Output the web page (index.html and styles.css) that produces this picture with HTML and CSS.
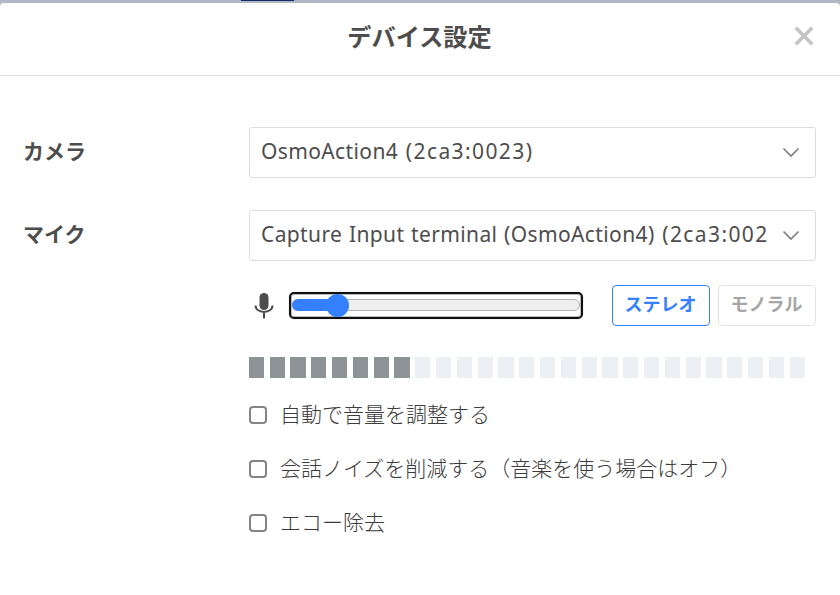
FILE: index.html
```html
<!DOCTYPE html>
<html lang="ja">
<head>
<meta charset="utf-8">
<title>デバイス設定</title>
<link rel="stylesheet" href="styles.css">
</head>
<body>
<div class="page-accent"></div>
<main class="modal">
  <header class="header">
    <h1 class="title">デバイス設定</h1>
    <button class="close" aria-label="閉じる"><svg width="20" height="20" viewBox="0 0 20 20"><path d="M1.8 1.8 18.2 18.2M18.2 1.8 1.8 18.2"/></svg></button>
  </header>
  <div class="body">
    <section class="row">
      <h2 class="label">カメラ</h2>
      <div class="select"><span class="value">OsmoAction4 <span class="code">(2ca3:0023)</span></span><svg class="chevron" width="18" height="11" viewBox="0 0 18 11"><path d="M1.5 1.5 9 9 16.5 1.5"/></svg></div>
    </section>
    <section class="row">
      <h2 class="label">マイク</h2>
      <div class="field">
        <div class="select"><span class="value">Capture Input terminal (OsmoAction4) <span class="code">(2ca3:0023)</span></span><svg class="chevron" width="18" height="11" viewBox="0 0 18 11"><path d="M1.5 1.5 9 9 16.5 1.5"/></svg></div>
        <div class="controls">
          <svg class="mic" width="20" height="28" viewBox="0 0 20 28"><rect x="5.5" y="1" width="9" height="17" rx="4.5"/><path d="M1.5 13.5C1.5 22 18.5 22 18.5 13.5M10 20V26.5"/></svg>
          <div class="slider"><div class="track"><div class="fill"></div></div><div class="thumb"></div></div>
          <button class="mode active">ステレオ</button>
          <button class="mode">モノラル</button>
        </div>
        <div class="meter">
          <i class="on"></i><i class="on"></i><i class="on"></i><i class="on"></i><i class="on"></i><i class="on"></i><i class="on"></i><i class="on"></i><i></i><i></i><i></i><i></i><i></i><i></i><i></i><i></i><i></i><i></i><i></i><i></i><i></i><i></i><i></i><i></i><i></i><i></i><i></i>
        </div>
        <label class="check"><input type="checkbox"><span>自動で音量を調整する</span></label>
        <label class="check"><input type="checkbox"><span>会話ノイズを削減する（音楽を使う場合はオフ）</span></label>
        <label class="check"><input type="checkbox"><span>エコー除去</span></label>
      </div>
    </section>
  </div>
</main>
</body>
</html>
```
FILE: styles.css
```css
* { box-sizing: border-box; }
body {
  margin: 0;
  padding-top: 3px;
  height: 595px;
  overflow: hidden;
  background: #b1b7c3;
  color: #4d4d4d;
  font-family: "Noto Sans", "Noto Sans CJK JP", sans-serif;
}
.page-accent {
  position: absolute;
  top: 0;
  left: 241px;
  width: 53px;
  height: 1px;
  background: #0d2d6c;
}
.modal { height: 592px; background: #fff; border-radius: 4px 4px 0 0; }
.header {
  display: grid;
  grid-template-columns: 1fr auto 1fr;
  align-items: center;
  height: 73px;
  padding: 0 26px 7px 25px;
  border-bottom: 1px solid #ddd;
}
.title {
  grid-column: 2;
  margin: 0;
  font: 700 24.2px/36px "Noto Sans CJK JP", sans-serif;
}
.close {
  justify-self: end;
  display: flex;
  padding: 0;
  border: 0;
  background: none;
}
.close path { stroke: #c4c4c4; stroke-width: 3.6; fill: none; }
.body {
  display: flex;
  flex-direction: column;
  gap: 32px;
  padding: 51px 24px 0 23px;
}
.row { display: grid; grid-template-columns: 226px 567px; }
.label {
  margin: 0;
  font: 700 21px/46px "Noto Sans CJK JP", sans-serif;
}
.select {
  display: flex;
  align-items: center;
  justify-content: space-between;
  height: 51px;
  padding: 0 15px 0 11px;
  border: 1px solid #ddd;
  border-radius: 3px;
}
.value {
  width: 507px;
  overflow: hidden;
  white-space: nowrap;
  font-size: 21px;
  line-height: 44px;
  padding-bottom: 4px;
  letter-spacing: 0.38px;
  word-spacing: 0.8px;
}
.code { margin-left: 1px; letter-spacing: 1.4px; }
.chevron path { fill: none; stroke: #808080; stroke-width: 1.7; }
.controls { display: flex; align-items: center; margin-top: 24px; height: 41px; }
.mic { margin: 0 15.5px 0 4.5px; fill: #4d4d4d; }
.mic path { fill: none; stroke: #4d4d4d; stroke-width: 2; }
.slider {
  position: relative;
  display: flex;
  align-items: center;
  width: 294px;
  height: 27px;
  margin: 0 29px 1px 0;
  padding: 0 3px;
  border: 2px solid #101010;
  border-radius: 5px;
  box-shadow: inset 0 0 0 1px #bbb, 0 0 1px #888;
}
.track {
  width: 100%;
  height: 12px;
  margin: 0 -2px;
  flex: 1;
  border: 1px solid #b2b2b2;
  border-radius: 6px;
  background: #efefef;
}
.fill { width: 46px; height: 12px; margin: -1px; border-radius: 6px 0 0 6px; background: #3580ff; }
.thumb {
  position: absolute;
  left: 35px;
  top: 0;
  width: 23px;
  height: 23px;
  border-radius: 50%;
  background: #3580ff;
}
.mode {
  width: 98px;
  height: 41px;
  margin: 0 8px 0 0;
  padding: 0 1px 5px 0;
  border: 1px solid #e3e3e3;
  border-radius: 4px;
  background: #fff;
  color: #a6a6a6;
  font: 700 18px/34px "Noto Sans CJK JP", sans-serif;
}
.mode:last-child { margin-right: 0; }
.mode.active { border-color: #3580ff; color: #3580ff; }
.meter { display: flex; gap: 5.62px; margin: 31px 0 0 -0.2px; height: 21px; }
.meter i { flex: 0 0 15.2px; background: #ecf0f5; }
.meter .on { background: #8e9397; }
.check {
  display: flex;
  align-items: center;
  height: 30px;
  margin-top: 24px;
  color: #3c3c3c;
  font: 300 21px/30px "Noto Sans CJK JP", sans-serif;
}
.check span { padding-bottom: 3px; }
.meter + .check { margin-top: 21px; }
.check input {
  appearance: none;
  width: 18px;
  height: 18px;
  margin: 1px 13px 0 0;
  border: 2px solid #858585;
  border-radius: 4px;
}
```
